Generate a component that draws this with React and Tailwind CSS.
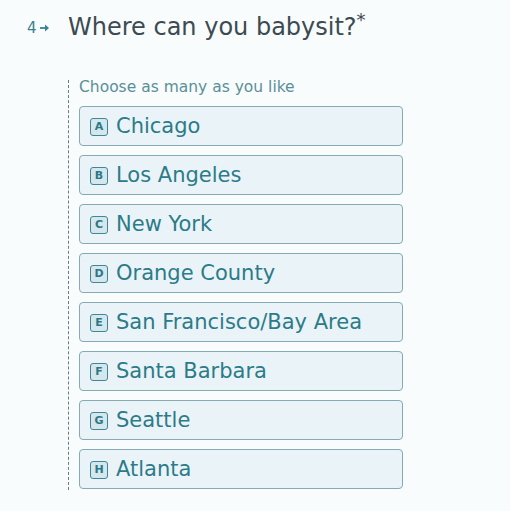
import React from "react";

const options = [
  ["A", "Chicago"],
  ["B", "Los Angeles"],
  ["C", "New York"],
  ["D", "Orange County"],
  ["E", "San Francisco/Bay Area"],
  ["F", "Santa Barbara"],
  ["G", "Seattle"],
  ["H", "Atlanta"],
];

export default function App() {
  return (
    <div
      className="w-[510px] h-[511px] bg-[#f8fcfd] overflow-hidden"
      style={{ fontFamily: '"DejaVu Sans", sans-serif' }}
    >
      <div className="flex items-center pt-[10px] pl-[27px]">
        <div className="flex items-center w-[41px] text-[15px] text-[#3a8290]">
          <span>4</span>
          <svg width="12" height="10" viewBox="0 0 12 10" className="ml-[2px]">
            <path d="M1 5h8" stroke="#3a8290" strokeWidth="1.8" />
            <path d="M6 1.5L10 5L6 8.5z" fill="#3a8290" />
          </svg>
        </div>
        <div className="text-[24px] text-[#3c4a52] leading-[34px]">
          Where can you babysit?
          <span className="relative top-[-9px] text-[18px]">*</span>
        </div>
      </div>
      <div className="ml-[68px] mt-[34px] w-fit border-l border-dashed border-[#6b7a80] pl-[10px] pb-[1px]">
        <div className="text-[15.5px] text-[#5a8f98] leading-[15px] mb-[11px]">
          Choose as many as you like
        </div>
        <div className="flex flex-col gap-[9px]">
          {options.map(([k, label]) => (
            <div
              key={k}
              className="w-[324px] h-[40px] flex items-center rounded-[4px] border border-[#86aab2] bg-[#eaf4f8] pl-[10px]"
            >
              <div className="w-[18px] h-[18px] mt-[1px] rounded-[3px] border border-[#3f8794] bg-[#d3e7ec] flex items-center justify-center text-[11px] font-bold text-[#2e7886] leading-none">
                {k}
              </div>
              <div className="ml-[8px] pt-[2px] text-[21px] text-[#2c7b89]">{label}</div>
            </div>
          ))}
        </div>
      </div>
    </div>
  );
}
